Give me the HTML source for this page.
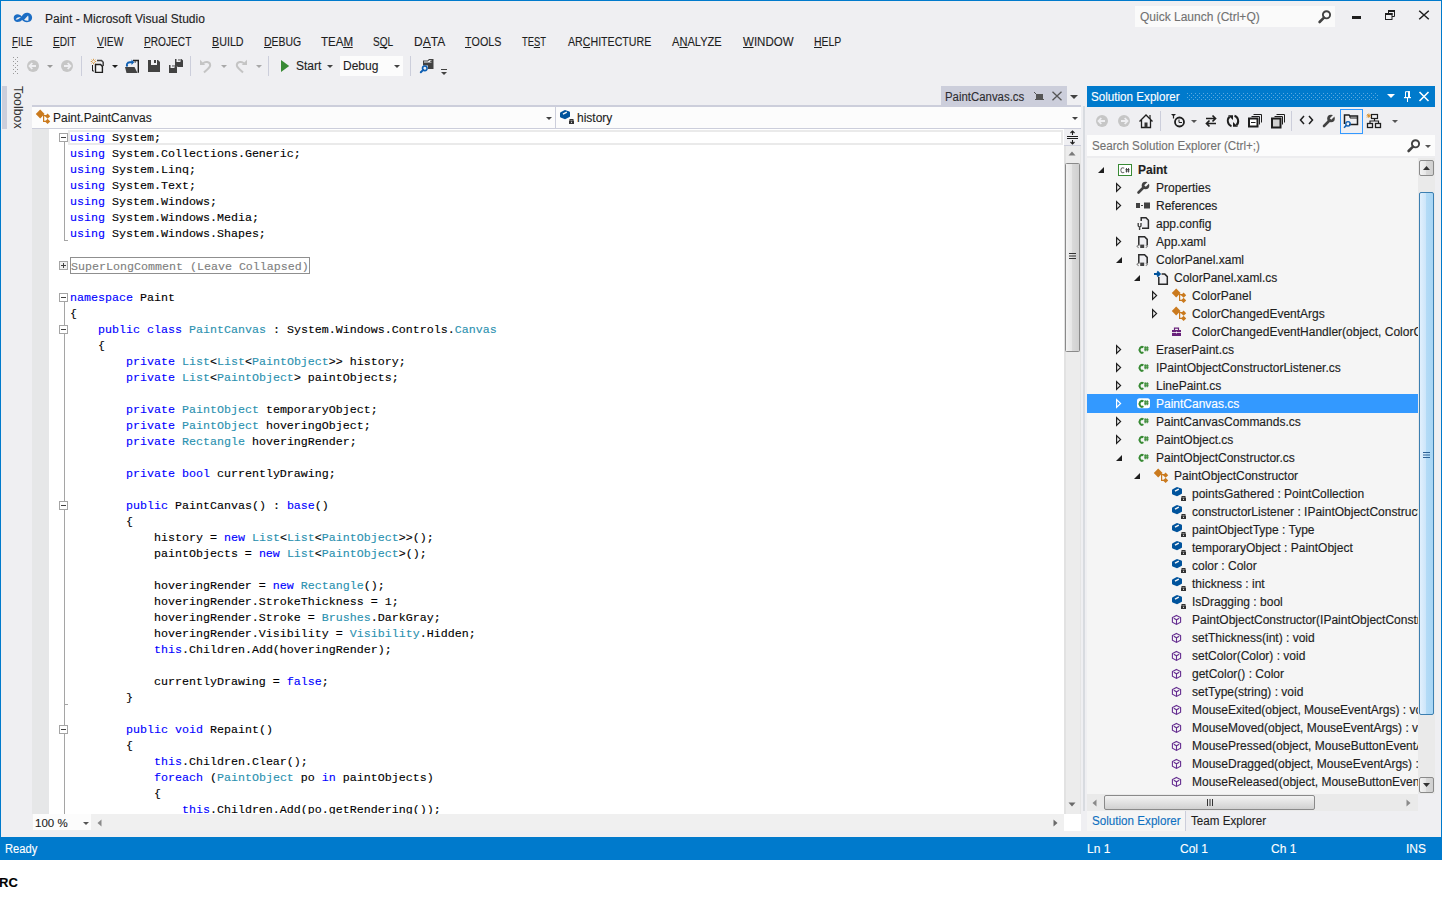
<!DOCTYPE html>
<html><head><meta charset="utf-8">
<style>
*{box-sizing:border-box}
html,body{margin:0;padding:0;width:1442px;height:900px;overflow:hidden;background:#fff;font-family:"Liberation Sans",sans-serif;font-size:12px;color:#1e1e1e}
.a{position:absolute;display:block}
.t{position:absolute;white-space:nowrap;line-height:14px;-webkit-text-stroke:0.12px currentColor}
#win{position:absolute;left:0;top:0;width:1442px;height:860px;background:#EFEFF2;border:1px solid #007ACC;border-bottom:none}
.mi{position:absolute;top:35px;line-height:14px;white-space:nowrap;transform-origin:0 0;color:#1e1e1e;-webkit-text-stroke:0.12px currentColor}
.mi u{text-decoration:none;position:relative}
.mi u:after{content:"";position:absolute;left:0;right:0;top:12px;height:1px;background:#1e1e1e}
.sep{position:absolute;width:1px;background:#CCCEDB}
.dd{position:absolute;width:0;height:0;border-left:3px solid transparent;border-right:3px solid transparent;border-top:3px solid #717171}
.code{position:absolute;left:70px;top:130px;height:684px;overflow:hidden;font-family:"Liberation Mono",monospace;font-size:11.67px;letter-spacing:0;line-height:16px;white-space:pre;color:#000;-webkit-text-stroke:0.12px currentColor}
.k{color:#0000FF}.ty{color:#2B91AF}
.row{position:absolute;height:18px;white-space:nowrap;line-height:18px;-webkit-text-stroke:0.15px currentColor}
.cb{position:absolute;left:59px;width:9px;height:9px;border:1px solid #A5A5A5;background:#fff}
.cb:before{content:"";position:absolute;left:1px;top:3px;width:5px;height:1px;background:#424242}
.ol{position:absolute;left:64px;width:1px;background:#A5A5A5}
#status{position:absolute;left:0;top:837px;width:1442px;height:23px;background:#007ACC;color:#fff}
</style></head>
<body>
<div id="win"></div>
<svg width="0" height="0" style="position:absolute">
<defs>
<linearGradient id="gthumb" x1="0" x2="1" y1="0" y2="0"><stop offset="0" stop-color="#F4F4F4"/><stop offset="0.45" stop-color="#E6E6E6"/><stop offset="0.5" stop-color="#D9D9D9"/><stop offset="1" stop-color="#CFCFCF"/></linearGradient>
<linearGradient id="gblue" x1="0" x2="1" y1="0" y2="0"><stop offset="0" stop-color="#E3F1FD"/><stop offset="0.45" stop-color="#CDE6FA"/><stop offset="0.5" stop-color="#B3DBF6"/><stop offset="1" stop-color="#A7D5F5"/></linearGradient>
<symbol id="aE" viewBox="0 0 18 18"><path d="M3 13H9V7z" fill="#1e1e1e"/></symbol>
<symbol id="aC" viewBox="0 0 18 18"><path d="M3.6 5.6V13.4L7.6 9.5z" fill="none" stroke="#1e1e1e" stroke-width="1.2" stroke-linejoin="miter"/></symbol>
<symbol id="aCw" viewBox="0 0 18 18"><path d="M3.6 5.6V13.4L7.6 9.5z" fill="none" stroke="#fff" stroke-width="1.2"/></symbol>
<symbol id="i_csproj" viewBox="0 0 18 18"><rect x="2.5" y="4.5" width="13" height="11" fill="#fff" stroke="#388A34"/><path d="M8.2 8.3A2.1 2.5 0 1 0 8.2 12.2" fill="none" stroke="#717171" stroke-width="1.1"/><path d="M10.5 8v4.5M12.5 8v4.5M9.5 9.5h4M9.5 11h4" stroke="#424242" stroke-width="0.9"/></symbol>
<symbol id="i_wrench" viewBox="0 0 18 18"><path d="M4.5 14.5L9.5 9.5" stroke="#424242" stroke-width="2.6" stroke-linecap="round"/><circle cx="11.5" cy="7.5" r="3.8" fill="#424242"/><path d="M11 8L14.8 4.2" stroke="#F5F5F5" stroke-width="2.2"/></symbol>
<symbol id="i_refs" viewBox="0 0 18 18"><rect x="2" y="7" width="4" height="5" fill="#424242"/><rect x="7" y="9" width="2" height="1" fill="#424242"/><rect x="10" y="6.5" width="6" height="6" fill="#424242"/></symbol>
<symbol id="i_config" viewBox="0 0 18 18"><path d="M7.2 7V3.8H12L14.4 6.2V14.3H8" fill="#EFEFF2" stroke="#2a2a2a" stroke-width="1.5"/><path d="M4.2 9v2.5a1.4 1.4 0 0 0 2.8 0V9M5.6 13v3" fill="none" stroke="#424242" stroke-width="1.4"/></symbol>
<symbol id="i_xaml" viewBox="0 0 18 18"><path d="M4.8 13.5V4.8H10.6L13.2 7.4V13.5" fill="#EFEFF2" stroke="#2a2a2a" stroke-width="1.5" stroke-linejoin="miter"/><rect x="6.2" y="12.6" width="4" height="3.4" fill="#424242"/><path d="M4.6 12.8L3 14.3 4.6 15.8M11.8 12.8L13.4 14.3 11.8 15.8" fill="none" stroke="#8a8a8a" stroke-width="1.1"/></symbol>
<symbol id="i_csbehind" viewBox="0 0 18 18"><path d="M6.8 9V16.3H15.3V8.6L12.8 6.1H9.6" fill="#EFEFF2" stroke="#2a2a2a" stroke-width="1.5"/><path d="M2 6H7.5M5.2 3.5L7.8 6 5.2 8.5" fill="none" stroke="#00539C" stroke-width="1.9"/></symbol>
<symbol id="i_class" viewBox="0 0 18 18"><path d="M6.2 2.6L10.6 7 6.2 11.4 1.8 7z" fill="#CA7A1E"/><path d="M9 8.6H13.5M9.6 8.6V14.4H13.5" fill="none" stroke="#CA7A1E" stroke-width="1.2"/><path d="M13.6 6.6L16.2 9.2 13.6 11.8 11 9.2z" fill="#CA7A1E"/><path d="M13.6 11.8L16.2 14.4 13.6 17 11 14.4z" fill="#CA7A1E"/></symbol>
<symbol id="i_delegate" viewBox="0 0 18 18"><rect x="2" y="8" width="9" height="6" fill="#68217A"/><path d="M4.5 8V6.2H8.5V8" fill="none" stroke="#68217A" stroke-width="1.2"/><path d="M2 10.5H11M6.5 9.5v2" stroke="#fff" stroke-width="0.8"/></symbol>
<symbol id="i_cs" viewBox="0 0 18 18"><path d="M9.4 7.4A2.5 2.9 0 1 0 9.4 12.3" fill="none" stroke="#388A34" stroke-width="2"/><path d="M11.2 6.3v5M13.2 6.3v5M10.2 7.9h4.4M10.2 9.8h4.4" stroke="#388A34" stroke-width="1.1"/></symbol>
<symbol id="i_cssel" viewBox="0 0 18 18"><rect x="3" y="4.2" width="13" height="10" rx="2.5" fill="#fff"/><path d="M9.4 7.4A2.5 2.9 0 1 0 9.4 12.3" fill="none" stroke="#388A34" stroke-width="2"/><path d="M11.2 6.3v5M13.2 6.3v5M10.2 7.9h4.4M10.2 9.8h4.4" stroke="#388A34" stroke-width="1.1"/></symbol>
<symbol id="i_field" viewBox="0 0 18 18"><path d="M2 6.2Q2 5.6 2.6 5.2L6.4 3.3Q7 3 7.6 3.2L11.4 4.6Q12 4.9 12 5.5V9.2Q12 9.8 11.4 10.1L7.6 12Q7 12.3 6.4 12L2.6 10.4Q2 10.1 2 9.5z" fill="#00539C"/><path d="M5 7.2L8.8 5.2" stroke="#F5F5F5" stroke-width="1.5"/><rect x="11" y="13.6" width="5" height="3.4" fill="#333"/><path d="M12.1 13.8V12.6H14.9V13.8" fill="none" stroke="#333" stroke-width="1.2"/><rect x="13" y="14.8" width="1" height="1" fill="#F5F5F5"/></symbol>
<symbol id="i_method" viewBox="0 0 18 18"><path d="M6.5 5.4L10.6 7.6V12.2L6.5 14.4 2.4 12.2V7.6z" fill="none" stroke="#652D90" stroke-width="1.1"/><path d="M3.8 8.3L6.5 9.8 9.2 8.3M6.5 9.8V14" fill="none" stroke="#652D90" stroke-width="1.1"/></symbol>
<symbol id="ddarrow" viewBox="0 0 6 3"><path d="M0 0H6L3 3z" fill="#717171"/></symbol>
</defs>
</svg>


<!-- ============ title bar ============ -->
<svg class="a" style="left:10px;top:8px" width="30" height="20" viewBox="0 0 30 20"><path fill="#1C6DC4" fill-rule="evenodd" d="M3.7 10C3.7 7.6 5.5 6.3 7.5 6.3 9.5 6.3 10.8 7.4 11.6 8.4 12.9 6.4 14.6 4.8 17 4.8 20 4.8 22.1 7 22.1 9.5 22.1 12.3 20 14.2 17 14.2 14.6 14.2 13.1 13.1 12.1 12 11.1 13.2 9.6 14 7.5 14 5.5 14 3.7 12.5 3.7 10Z M5.7 11.8C6 10.3 7.6 9.1 10.9 9 9.6 10.6 8 11.7 5.7 11.8Z M14.1 11.8L18.1 7.4C18.6 8.9 18.6 11 18.3 12.7 16.6 12.8 15.1 12.5 14.1 11.8Z"/></svg>
<div class="t" style="left:45px;top:12px">Paint - Microsoft Visual Studio</div>

<div class="a" style="left:1135px;top:6px;width:200px;height:21px;background:#FAFAFA"></div>
<div class="t" style="left:1140px;top:10px;color:#717171">Quick Launch (Ctrl+Q)</div>
<svg class="a" style="left:1317px;top:9px" width="16" height="15" viewBox="0 0 16 15"><circle cx="9.5" cy="5.8" r="3.6" fill="none" stroke="#424242" stroke-width="1.9"/><path d="M2.6 13L7 8.6" stroke="#424242" stroke-width="2.6" stroke-linecap="round"/></svg>

<div class="a" style="left:1352px;top:16px;width:9px;height:3px;background:#1e1e1e"></div>
<svg class="a" style="left:1384px;top:9px" width="12" height="12" viewBox="0 0 12 12"><path d="M4.5 1.5V4M4.5 2H10.5V7.5H8" fill="none" stroke="#1e1e1e" stroke-width="1"/><rect x="4" y="1" width="7" height="2" fill="#1e1e1e"/><rect x="1.5" y="4.5" width="6.5" height="6" fill="none" stroke="#1e1e1e" stroke-width="1"/><rect x="1" y="4" width="7.5" height="2" fill="#1e1e1e"/></svg>
<svg class="a" style="left:1418px;top:10px" width="12" height="10" viewBox="0 0 12 10"><path d="M1.2 0.8L10.8 9.2M10.8 0.8L1.2 9.2" stroke="#1e1e1e" stroke-width="1.5"/></svg>

<!-- ============ menu ============ -->
<div class="mi" style="left:12px;transform:scaleX(0.812)"><u>F</u>ILE</div>
<div class="mi" style="left:53px;transform:scaleX(0.841)"><u>E</u>DIT</div>
<div class="mi" style="left:97px;transform:scaleX(0.861)"><u>V</u>IEW</div>
<div class="mi" style="left:144px;transform:scaleX(0.845)"><u>P</u>ROJECT</div>
<div class="mi" style="left:212px;transform:scaleX(0.894)"><u>B</u>UILD</div>
<div class="mi" style="left:264px;transform:scaleX(0.871)"><u>D</u>EBUG</div>
<div class="mi" style="left:321px;transform:scaleX(0.961)">TEA<u>M</u></div>
<div class="mi" style="left:373px;transform:scaleX(0.842)">S<u>Q</u>L</div>
<div class="mi" style="left:414px;transform:scaleX(1.0)">D<u>A</u>TA</div>
<div class="mi" style="left:465px;transform:scaleX(0.893)"><u>T</u>OOLS</div>
<div class="mi" style="left:522px;transform:scaleX(0.784)">TE<u>S</u>T</div>
<div class="mi" style="left:568px;transform:scaleX(0.886)">AR<u>C</u>HITECTURE</div>
<div class="mi" style="left:672px;transform:scaleX(0.924)">A<u>N</u>ALYZE</div>
<div class="mi" style="left:743px;transform:scaleX(0.96)"><u>W</u>INDOW</div>
<div class="mi" style="left:814px;transform:scaleX(0.871)"><u>H</u>ELP</div>

<!-- ============ toolbar ============ -->
<svg class="a" style="left:12px;top:56px" width="8" height="20" viewBox="0 0 8 20" fill="#9A9A9A"><rect x="1" y="1" width="1" height="1"/><rect x="5" y="1" width="1" height="1"/><rect x="3" y="3" width="1" height="1"/><rect x="1" y="5" width="1" height="1"/><rect x="5" y="5" width="1" height="1"/><rect x="3" y="7" width="1" height="1"/><rect x="1" y="9" width="1" height="1"/><rect x="5" y="9" width="1" height="1"/><rect x="3" y="11" width="1" height="1"/><rect x="1" y="13" width="1" height="1"/><rect x="5" y="13" width="1" height="1"/><rect x="3" y="15" width="1" height="1"/><rect x="1" y="17" width="1" height="1"/><rect x="5" y="17" width="1" height="1"/></svg>
<svg class="a" style="left:26px;top:59px" width="14" height="14" viewBox="0 0 14 14"><circle cx="7" cy="7" r="6" fill="#C6C6C6"/><path d="M3.5 7H10M6.3 4L3.5 7 6.3 10" fill="none" stroke="#EFEFF2" stroke-width="1.8"/></svg>
<div class="dd" style="left:47px;top:65px;border-top-color:#999"></div>
<svg class="a" style="left:60px;top:59px" width="14" height="14" viewBox="0 0 14 14"><circle cx="7" cy="7" r="6" fill="#C6C6C6"/><path d="M10.5 7H4M7.7 4L10.5 7 7.7 10" fill="none" stroke="#EFEFF2" stroke-width="1.8"/></svg>
<div class="sep" style="left:81px;top:56px;height:20px"></div>
<svg class="a" style="left:90px;top:58px" width="16" height="16" viewBox="0 0 16 16"><path d="M3.5 0.8v5.4M0.8 3.5h5.4M1.6 1.6l3.8 3.8M5.4 1.6L1.6 5.4" stroke="#D68A1E" stroke-width="0.8"/><circle cx="3.5" cy="3.5" r="1.3" fill="#EFEFF2"/><path d="M7 2.5H11.5L13.2 4.2V8" fill="none" stroke="#424242" stroke-width="1.5"/><path d="M5.5 6.5H10.5L12.4 8.4V14.4H5.5z" fill="#F6F6F6" stroke="#1e1e1e" stroke-width="1.4"/><path d="M2.5 7V13H4" fill="none" stroke="#1e1e1e" stroke-width="1"/></svg>
<div class="dd" style="left:112px;top:65px;border-top-color:#1e1e1e"></div>
<svg class="a" style="left:124px;top:58px" width="16" height="16" viewBox="0 0 16 16"><path d="M9 2.5H14.3V14.8" fill="none" stroke="#1e1e1e" stroke-width="1.4"/><rect x="10.5" y="3.5" width="1.5" height="1" fill="#1e1e1e"/><path d="M1 9H10.5L13.5 15H2.5z" fill="#424242"/><path d="M3.5 8.5C2 7 3 4.5 6 4.3H8.5" fill="none" stroke="#0E5FB3" stroke-width="1.9"/><path d="M7.5 1.5L10.2 4.3 7.5 7.1z" fill="#0E5FB3"/></svg>
<svg class="a" style="left:147px;top:59px" width="14" height="14" viewBox="0 0 14 14"><path d="M1 1H4V6H10V1H11L13 3V13H1z" fill="#424242"/><rect x="7" y="1" width="2" height="3" fill="#424242"/></svg>
<svg class="a" style="left:168px;top:58px" width="18" height="16" viewBox="0 0 18 16"><path d="M7 1H8.5V4H12.5V1H13.5L15 2.5V9H9.8L8.5 7.7V8H7z" fill="#424242"/><rect x="10.5" y="1" width="1" height="1.8" fill="#424242"/><path d="M1 7H2.5V10H6.5V7H7.5L9 8.5V15H1z" fill="#424242"/><rect x="4.5" y="7" width="1" height="1.8" fill="#424242"/></svg>
<div class="sep" style="left:190px;top:56px;height:20px"></div>
<svg class="a" style="left:199px;top:58px" width="14" height="16" viewBox="0 0 14 16"><path d="M4 5.5C6 3 11 3.5 11.2 7 11.4 9.5 8 11.5 5 14.5" fill="none" stroke="#C4C4C4" stroke-width="2"/><path d="M1 1.8V7H6.2z" fill="#C4C4C4"/></svg>
<div class="dd" style="left:221px;top:65px;border-top-color:#A8A8A8"></div>
<svg class="a" style="left:234px;top:58px" width="14" height="16" viewBox="0 0 14 16"><path d="M10 5.5C8 3 3 3.5 2.8 7 2.6 9.5 6 11.5 9 14.5" fill="none" stroke="#C4C4C4" stroke-width="2"/><path d="M13 1.8V7H7.8z" fill="#C4C4C4"/></svg>
<div class="dd" style="left:256px;top:65px;border-top-color:#A8A8A8"></div>
<div class="sep" style="left:268px;top:56px;height:20px"></div>
<svg class="a" style="left:280px;top:59px" width="10" height="14" viewBox="0 0 10 14"><path d="M1 1V13L9.2 7z" fill="#388A34"/></svg>
<div class="t" style="left:296px;top:59px">Start</div>
<div class="dd" style="left:327px;top:65px;border-top-color:#424242"></div>
<div class="a" style="left:340px;top:56px;width:63px;height:20px;background:#FCFCFC"></div>
<div class="t" style="left:343px;top:59px">Debug</div>
<div class="dd" style="left:394px;top:65px;border-top-color:#424242"></div>
<div class="sep" style="left:410px;top:56px;height:20px"></div>
<svg class="a" style="left:419px;top:58px" width="16" height="16" viewBox="0 0 16 16"><path d="M4 2.5H8.5L10 1H14.5V11H9V7.5H4z" fill="#424242"/><path d="M5 3.5H8.8L10.2 2.2H12.5V4.5H5z" fill="#F5F5F5"/><circle cx="12" cy="3.4" r="0.7" fill="#1e1e1e"/><circle cx="5.8" cy="10.3" r="2.3" fill="#EFEFF2" stroke="#0E5FB3" stroke-width="1.6"/><path d="M1.8 14.3L4.2 11.9" stroke="#0E5FB3" stroke-width="2" stroke-linecap="round"/></svg>
<div class="a" style="left:441px;top:69px;width:6px;height:1px;background:#424242"></div>
<div class="dd" style="left:441px;top:72px;border-top-color:#424242"></div>

<!-- ============ toolbox tab ============ -->
<div class="a" style="left:2px;top:86px;width:5px;height:43px;background:#CCCEDB"></div>
<div class="t" style="left:25px;top:86px;transform-origin:0 0;transform:rotate(90deg) scaleX(1.03);color:#333;-webkit-text-stroke:0">Toolbox</div>

<!-- ============ document tab ============ -->
<div class="a" style="left:941px;top:86px;width:126px;height:19px;background:#CCCEDB"></div>
<div class="t" style="transform-origin:0 0;transform:scaleX(0.95);left:945px;top:90px;color:#2d2d30">PaintCanvas.cs</div>
<svg class="a" style="left:1033px;top:91px" width="12" height="10" viewBox="0 0 12 10"><path d="M1 1L4 4" stroke="#555" stroke-width="1"/><rect x="3" y="3" width="7" height="5" fill="#555"/><rect x="2" y="8" width="9" height="1" fill="#555"/></svg>
<svg class="a" style="left:1051px;top:91px" width="12" height="10" viewBox="0 0 12 10"><path d="M1.5 0.8L10.5 9.2M10.5 0.8L1.5 9.2" stroke="#555" stroke-width="1.3"/></svg>
<div class="dd" style="left:1070px;top:95px;border-left-width:4px;border-right-width:4px;border-top:4px solid #424242"></div>

<!-- ============ editor frame ============ -->
<div class="a" style="left:32px;top:105px;width:1049px;height:2px;background:#CCCEDB"></div>
<div class="a" style="left:32px;top:107px;width:1049px;height:21px;background:#FCFCFC"></div>
<div class="a" style="left:32px;top:128px;width:1049px;height:1px;background:#CCCEDB"></div>
<div class="a" style="left:555px;top:107px;width:1px;height:21px;background:#CCCEDB"></div>
<svg class="a" style="left:34px;top:107px" width="18" height="18"><use href="#i_class"/></svg>
<div class="t" style="left:53px;top:111px">Paint.PaintCanvas</div>
<div class="dd" style="left:546px;top:117px;border-top-color:#424242"></div>
<svg class="a" style="left:558px;top:107px" width="18" height="18"><use href="#i_field"/></svg>
<div class="t" style="left:577px;top:111px">history</div>
<div class="dd" style="left:1072px;top:117px;border-top-color:#424242"></div>

<div class="a" style="left:32px;top:129px;width:17px;height:685px;background:#E6E7E8"></div>
<div class="a" style="left:49px;top:129px;width:1015px;height:685px;background:#fff"></div>
<!-- current line highlight -->
<div class="a" style="left:68px;top:130px;width:995px;height:15px;border:2px solid #EAEAEA"></div>
<!-- outlining -->
<div class="cb" style="top:133px"></div>
<div class="ol" style="top:142px;height:98px"></div>
<div class="a" style="left:64px;top:240px;width:4px;height:1px;background:#A5A5A5"></div>
<div class="cb" style="top:261px;background:#F0F0F0"><div class="a" style="left:3px;top:1px;width:1px;height:5px;background:#424242"></div></div>
<div class="a" style="left:70px;top:257px;width:240px;height:17px;border:1px solid #8F8F8F"></div>
<div class="cb" style="top:293px"></div>
<div class="ol" style="top:302px;height:23px"></div>
<div class="cb" style="top:325px"></div>
<div class="ol" style="top:334px;height:480px"></div>
<div class="cb" style="top:501px"></div>
<div class="a" style="left:64px;top:704px;width:4px;height:1px;background:#A5A5A5"></div>
<div class="cb" style="top:725px"></div>

<!-- editor scrollbars -->
<div class="a" style="left:1064px;top:129px;width:17px;height:685px;background:#ECECEC;border-left:2px solid #E2E2E2;border-right:1px solid #E5E5E5"></div>
<div class="a" style="left:1083px;top:106px;width:2px;height:705px;background:#D8DBE0"></div>
<div class="a" style="left:1064px;top:129px;width:17px;height:17px;background:#EFEFF2;border-bottom:1px solid #CCCEDB"></div>
<svg class="a" style="left:1066px;top:130px" width="13" height="15" viewBox="0 0 13 15"><path d="M1 6.5H12M1 8.5H12" stroke="#1e1e1e" stroke-width="1"/><path d="M6.5 1V5M4.5 3L6.5 1 8.5 3M6.5 14V10M4.5 12L6.5 14 8.5 12" fill="none" stroke="#1e1e1e" stroke-width="1.1"/></svg>
<svg class="a" style="left:1068px;top:151px" width="8" height="5" viewBox="0 0 8 5"><path d="M0.5 4.5H7.5L4 0.5z" fill="#7A7A7A"/></svg>
<svg class="a" style="left:1064px;top:162px" width="17" height="191" viewBox="0 0 17 191"><rect x="1.5" y="1.5" width="14" height="188" rx="1" fill="url(#gthumb)" stroke="#8A8A8A"/><path d="M5 91.5H12M5 94H12M5 96.5H12" stroke="#333" stroke-width="1"/></svg>
<svg class="a" style="left:1068px;top:802px" width="8" height="5" viewBox="0 0 8 5"><path d="M0.5 0.5H7.5L4 4.5z" fill="#6A6A6A"/></svg>
<div class="a" style="left:32px;top:814px;width:1032px;height:17px;background:#F0F0F0"></div>
<div class="a" style="left:1064px;top:814px;width:17px;height:17px;background:#fff"></div>
<div class="a" style="left:33px;top:814px;width:58px;height:16px;background:#FCFCFC"></div>
<div class="t" style="left:35px;top:816px;font-size:11.5px">100 %</div>
<div class="dd" style="left:83px;top:822px;border-top-color:#555"></div>
<svg class="a" style="left:97px;top:819px" width="5" height="8" viewBox="0 0 5 8"><path d="M4.5 0.5V7.5L0.5 4z" fill="#8A8A8A"/></svg>
<svg class="a" style="left:1053px;top:819px" width="5" height="8" viewBox="0 0 5 8"><path d="M0.5 0.5V7.5L4.5 4z" fill="#6A6A6A"/></svg>

<!-- code -->
<div class="code"><span class="k">using</span> System;
<span class="k">using</span> System.Collections.Generic;
<span class="k">using</span> System.Linq;
<span class="k">using</span> System.Text;
<span class="k">using</span> System.Windows;
<span class="k">using</span> System.Windows.Media;
<span class="k">using</span> System.Windows.Shapes;

<span style="color:#808080;position:relative;left:1px;top:1px">SuperLongComment (Leave Collapsed)</span>

<span class="k">namespace</span> Paint
{
    <span class="k">public</span> <span class="k">class</span> <span class="ty">PaintCanvas</span> : System.Windows.Controls.<span class="ty">Canvas</span>
    {
        <span class="k">private</span> <span class="ty">List</span>&lt;<span class="ty">List</span>&lt;<span class="ty">PaintObject</span>&gt;&gt; history;
        <span class="k">private</span> <span class="ty">List</span>&lt;<span class="ty">PaintObject</span>&gt; paintObjects;

        <span class="k">private</span> <span class="ty">PaintObject</span> temporaryObject;
        <span class="k">private</span> <span class="ty">PaintObject</span> hoveringObject;
        <span class="k">private</span> <span class="ty">Rectangle</span> hoveringRender;

        <span class="k">private</span> <span class="k">bool</span> currentlyDrawing;

        <span class="k">public</span> PaintCanvas() : <span class="k">base</span>()
        {
            history = <span class="k">new</span> <span class="ty">List</span>&lt;<span class="ty">List</span>&lt;<span class="ty">PaintObject</span>&gt;&gt;();
            paintObjects = <span class="k">new</span> <span class="ty">List</span>&lt;<span class="ty">PaintObject</span>&gt;();

            hoveringRender = <span class="k">new</span> <span class="ty">Rectangle</span>();
            hoveringRender.StrokeThickness = 1;
            hoveringRender.Stroke = <span class="ty">Brushes</span>.DarkGray;
            hoveringRender.Visibility = <span class="ty">Visibility</span>.Hidden;
            <span class="k">this</span>.Children.Add(hoveringRender);

            currentlyDrawing = <span class="k">false</span>;
        }

        <span class="k">public</span> <span class="k">void</span> Repaint()
        {
            <span class="k">this</span>.Children.Clear();
            <span class="k">foreach</span> (<span class="ty">PaintObject</span> po <span class="k">in</span> paintObjects)
            {
                <span class="k">this</span>.Children.Add(po.getRendering());</div>

<!-- ============ solution explorer ============ -->
<div class="a" style="left:1087px;top:86px;width:348px;height:21px;background:#007ACC"></div>
<div class="t" style="transform-origin:0 0;transform:scaleX(0.97);left:1091px;top:90px;color:#fff">Solution Explorer</div>
<svg class="a" style="left:1187px;top:93px" width="192" height="7" viewBox="0 0 192 7"><defs><pattern id="dots" width="4" height="4" patternUnits="userSpaceOnUse"><rect x="0" y="0" width="1" height="1" fill="#5AA9E0"/><rect x="2" y="2" width="1" height="1" fill="#5AA9E0"/></pattern></defs><rect width="192" height="7" fill="url(#dots)"/></svg>
<div class="dd" style="left:1387px;top:94px;border-left-width:4px;border-right-width:4px;border-top:4px solid #fff"></div>
<svg class="a" style="left:1403px;top:89px" width="12" height="14" viewBox="0 0 12 14"><path d="M2.5 2.7H6.5V8.5H2.5z" fill="none" stroke="#fff" stroke-width="1"/><rect x="5" y="2.2" width="2" height="6.5" fill="#fff"/><rect x="1" y="8" width="7" height="1.2" fill="#fff"/><rect x="4" y="9" width="1" height="4" fill="#fff"/></svg>
<svg class="a" style="left:1418px;top:91px" width="12" height="11" viewBox="0 0 12 11"><path d="M1.5 1L10.5 10M10.5 1L1.5 10" stroke="#fff" stroke-width="1.6"/></svg>

<!-- SE toolbar -->
<svg class="a" style="left:1095px;top:114px" width="14" height="14" viewBox="0 0 14 14"><circle cx="7" cy="7" r="6" fill="#C6C6C6"/><path d="M3.5 7H10M6.3 4L3.5 7 6.3 10" fill="none" stroke="#EFEFF2" stroke-width="1.8"/></svg>
<svg class="a" style="left:1117px;top:114px" width="14" height="14" viewBox="0 0 14 14"><circle cx="7" cy="7" r="6" fill="#C6C6C6"/><path d="M10.5 7H4M7.7 4L10.5 7 7.7 10" fill="none" stroke="#EFEFF2" stroke-width="1.8"/></svg>
<svg class="a" style="left:1138px;top:113px" width="16" height="16" viewBox="0 0 16 16"><path d="M1.5 8.5L8 2 14.5 8.5M3.5 7V14.5H12.5V7" fill="none" stroke="#1e1e1e" stroke-width="1.3"/><rect x="6.5" y="9.5" width="3" height="5" fill="#333"/><path d="M12 2V6" stroke="#1e1e1e" stroke-width="1.2"/></svg>
<div class="sep" style="left:1160px;top:111px;height:20px"></div>
<svg class="a" style="left:1170px;top:113px" width="16" height="16" viewBox="0 0 16 16"><path d="M1 1H6L3.5 3.5z" fill="#1e1e1e"/><path d="M3.5 3V5.5" stroke="#1e1e1e" stroke-width="1.2"/><circle cx="9.5" cy="9" r="4.5" fill="none" stroke="#1e1e1e" stroke-width="1.8"/><path d="M9 6.5V9.5H12" fill="none" stroke="#1e1e1e" stroke-width="1"/></svg>
<div class="dd" style="left:1191px;top:120px;border-top-color:#555"></div>
<svg class="a" style="left:1204px;top:114px" width="14" height="14" viewBox="0 0 14 14"><path d="M2 4.5H11M8.5 1.5L11.5 4.5 8.5 7.5M12 9.5H3M5.5 6.5L2.5 9.5 5.5 12.5" fill="none" stroke="#1e1e1e" stroke-width="1.7"/></svg>
<svg class="a" style="left:1226px;top:114px" width="14" height="14" viewBox="0 0 14 14"><path d="M5.5 12.2A5 5.5 0 0 1 3.5 2.8M8.5 1.8A5 5.5 0 0 1 10.5 11.2" fill="none" stroke="#1e1e1e" stroke-width="2"/><path d="M2 1.2H7V6z M12 12.8H7V8z" fill="#1e1e1e"/></svg>
<svg class="a" style="left:1247px;top:113px" width="16" height="15" viewBox="0 0 16 15"><path d="M6.5 1.5H14.5V9.5M4.5 3.5H12.5V11.5" fill="none" stroke="#1e1e1e" stroke-width="1"/><rect x="2" y="5.5" width="8.5" height="8" fill="#fff" stroke="#1e1e1e" stroke-width="2"/><rect x="4" y="9" width="4.5" height="1" fill="#1e1e1e"/></svg>
<svg class="a" style="left:1270px;top:113px" width="16" height="16" viewBox="0 0 16 16"><path d="M6.5 1.5H14.5V9.5M4.5 3.5H12.5V11.5" fill="none" stroke="#1e1e1e" stroke-width="1"/><rect x="2" y="5.5" width="8.5" height="9" fill="#CFCFCF" stroke="#1e1e1e" stroke-width="2"/></svg>
<div class="sep" style="left:1291px;top:111px;height:20px"></div>
<svg class="a" style="left:1299px;top:114px" width="15" height="12" viewBox="0 0 15 12"><path d="M5 2L1.5 6 5 10M10 2L13.5 6 10 10" fill="none" stroke="#1e1e1e" stroke-width="1.5"/></svg>
<svg class="a" style="left:1322px;top:113px" width="14" height="15" viewBox="0 0 14 15"><path d="M2 13L7 8" stroke="#424242" stroke-width="2.6" stroke-linecap="round"/><circle cx="9" cy="5.5" r="3.8" fill="#424242"/><path d="M8.5 6L12.5 2" stroke="#EFEFF2" stroke-width="2.1"/></svg>
<div class="a" style="left:1340px;top:109px;width:23px;height:25px;border:1px solid #3399FF"></div>
<svg class="a" style="left:1343px;top:113px" width="17" height="16" viewBox="0 0 17 16"><path d="M1.5 11V2H6L7 3H14.5V11.5H6" fill="none" stroke="#1e1e1e" stroke-width="1.5"/><path d="M7 3V5H14.5" fill="none" stroke="#1e1e1e" stroke-width="1"/><circle cx="5" cy="10.8" r="2.2" fill="none" stroke="#0E5FB3" stroke-width="1.3"/><path d="M1 14.8L3.4 12.4" stroke="#0E5FB3" stroke-width="1.6"/></svg>
<svg class="a" style="left:1366px;top:113px" width="16" height="16" viewBox="0 0 16 16"><path d="M1 1L4.5 4.5M4.5 1L1 4.5M2.75 0.5V5M0.5 2.75H5" stroke="#D68A1E" stroke-width="0.8"/><rect x="5.5" y="1.5" width="6" height="4" fill="none" stroke="#1e1e1e" stroke-width="1.2"/><path d="M8.5 5.5V8M4 10V8H12.5V10" fill="none" stroke="#1e1e1e" stroke-width="1.2"/><rect x="1.5" y="10.5" width="5" height="4" fill="none" stroke="#1e1e1e" stroke-width="1.3"/><rect x="9.5" y="10.5" width="5" height="4" fill="none" stroke="#1e1e1e" stroke-width="1.3"/></svg>
<div class="dd" style="left:1392px;top:120px;border-top-color:#555"></div>

<div class="a" style="left:1087px;top:135px;width:348px;height:21px;background:#FCFCFC"></div>
<div class="t" style="transform-origin:0 0;transform:scaleX(0.97);left:1092px;top:139px;color:#717171">Search Solution Explorer (Ctrl+;)</div>
<svg class="a" style="left:1406px;top:138px" width="16" height="15" viewBox="0 0 16 15"><circle cx="9.5" cy="5.8" r="3.6" fill="none" stroke="#424242" stroke-width="1.9"/><path d="M2.6 13L7 8.6" stroke="#424242" stroke-width="2.6" stroke-linecap="round"/></svg>
<div class="dd" style="left:1425px;top:145px;border-top-color:#555"></div>

<div class="a" style="left:1087px;top:156px;width:348px;height:2px;background:#EDEDEF"></div>
<div class="a" style="left:1087px;top:158px;width:331px;height:636px;background:#F5F5F5;overflow:hidden">
<div class="a" style="left:0;top:236px;width:331px;height:19px;background:#3399FF"></div>
<svg class="a" style="left:8px;top:2px" width="18" height="18"><use href="#aE"/></svg>
<svg class="a" style="left:29px;top:2px" width="18" height="18"><use href="#i_csproj"/></svg>
<div class="row" style="left:51px;top:3px;font-weight:bold;">Paint</div>
<svg class="a" style="left:26px;top:20px" width="18" height="18"><use href="#aC"/></svg>
<svg class="a" style="left:47px;top:20px" width="18" height="18"><use href="#i_wrench"/></svg>
<div class="row" style="left:69px;top:21px;">Properties</div>
<svg class="a" style="left:26px;top:38px" width="18" height="18"><use href="#aC"/></svg>
<svg class="a" style="left:47px;top:38px" width="18" height="18"><use href="#i_refs"/></svg>
<div class="row" style="left:69px;top:39px;">References</div>
<svg class="a" style="left:47px;top:56px" width="18" height="18"><use href="#i_config"/></svg>
<div class="row" style="left:69px;top:57px;">app.config</div>
<svg class="a" style="left:26px;top:74px" width="18" height="18"><use href="#aC"/></svg>
<svg class="a" style="left:47px;top:74px" width="18" height="18"><use href="#i_xaml"/></svg>
<div class="row" style="left:69px;top:75px;">App.xaml</div>
<svg class="a" style="left:26px;top:92px" width="18" height="18"><use href="#aE"/></svg>
<svg class="a" style="left:47px;top:92px" width="18" height="18"><use href="#i_xaml"/></svg>
<div class="row" style="left:69px;top:93px;">ColorPanel.xaml</div>
<svg class="a" style="left:44px;top:110px" width="18" height="18"><use href="#aE"/></svg>
<svg class="a" style="left:65px;top:110px" width="18" height="18"><use href="#i_csbehind"/></svg>
<div class="row" style="left:87px;top:111px;">ColorPanel.xaml.cs</div>
<svg class="a" style="left:62px;top:128px" width="18" height="18"><use href="#aC"/></svg>
<svg class="a" style="left:83px;top:128px" width="18" height="18"><use href="#i_class"/></svg>
<div class="row" style="left:105px;top:129px;">ColorPanel</div>
<svg class="a" style="left:62px;top:146px" width="18" height="18"><use href="#aC"/></svg>
<svg class="a" style="left:83px;top:146px" width="18" height="18"><use href="#i_class"/></svg>
<div class="row" style="left:105px;top:147px;">ColorChangedEventArgs</div>
<svg class="a" style="left:83px;top:164px" width="18" height="18"><use href="#i_delegate"/></svg>
<div class="row" style="left:105px;top:165px;">ColorChangedEventHandler(object, ColorChangedEventArgs)</div>
<svg class="a" style="left:26px;top:182px" width="18" height="18"><use href="#aC"/></svg>
<svg class="a" style="left:47px;top:182px" width="18" height="18"><use href="#i_cs"/></svg>
<div class="row" style="left:69px;top:183px;">EraserPaint.cs</div>
<svg class="a" style="left:26px;top:200px" width="18" height="18"><use href="#aC"/></svg>
<svg class="a" style="left:47px;top:200px" width="18" height="18"><use href="#i_cs"/></svg>
<div class="row" style="left:69px;top:201px;">IPaintObjectConstructorListener.cs</div>
<svg class="a" style="left:26px;top:218px" width="18" height="18"><use href="#aC"/></svg>
<svg class="a" style="left:47px;top:218px" width="18" height="18"><use href="#i_cs"/></svg>
<div class="row" style="left:69px;top:219px;">LinePaint.cs</div>
<svg class="a" style="left:26px;top:236px" width="18" height="18"><use href="#aCw"/></svg>
<svg class="a" style="left:47px;top:236px" width="18" height="18"><use href="#i_cssel"/></svg>
<div class="row" style="left:69px;top:237px;color:#fff;">PaintCanvas.cs</div>
<svg class="a" style="left:26px;top:254px" width="18" height="18"><use href="#aC"/></svg>
<svg class="a" style="left:47px;top:254px" width="18" height="18"><use href="#i_cs"/></svg>
<div class="row" style="left:69px;top:255px;">PaintCanvasCommands.cs</div>
<svg class="a" style="left:26px;top:272px" width="18" height="18"><use href="#aC"/></svg>
<svg class="a" style="left:47px;top:272px" width="18" height="18"><use href="#i_cs"/></svg>
<div class="row" style="left:69px;top:273px;">PaintObject.cs</div>
<svg class="a" style="left:26px;top:290px" width="18" height="18"><use href="#aE"/></svg>
<svg class="a" style="left:47px;top:290px" width="18" height="18"><use href="#i_cs"/></svg>
<div class="row" style="left:69px;top:291px;">PaintObjectConstructor.cs</div>
<svg class="a" style="left:44px;top:308px" width="18" height="18"><use href="#aE"/></svg>
<svg class="a" style="left:65px;top:308px" width="18" height="18"><use href="#i_class"/></svg>
<div class="row" style="left:87px;top:309px;">PaintObjectConstructor</div>
<svg class="a" style="left:83px;top:326px" width="18" height="18"><use href="#i_field"/></svg>
<div class="row" style="left:105px;top:327px;">pointsGathered : PointCollection</div>
<svg class="a" style="left:83px;top:344px" width="18" height="18"><use href="#i_field"/></svg>
<div class="row" style="left:105px;top:345px;">constructorListener : IPaintObjectConstructorListener</div>
<svg class="a" style="left:83px;top:362px" width="18" height="18"><use href="#i_field"/></svg>
<div class="row" style="left:105px;top:363px;">paintObjectType : Type</div>
<svg class="a" style="left:83px;top:380px" width="18" height="18"><use href="#i_field"/></svg>
<div class="row" style="left:105px;top:381px;">temporaryObject : PaintObject</div>
<svg class="a" style="left:83px;top:398px" width="18" height="18"><use href="#i_field"/></svg>
<div class="row" style="left:105px;top:399px;">color : Color</div>
<svg class="a" style="left:83px;top:416px" width="18" height="18"><use href="#i_field"/></svg>
<div class="row" style="left:105px;top:417px;">thickness : int</div>
<svg class="a" style="left:83px;top:434px" width="18" height="18"><use href="#i_field"/></svg>
<div class="row" style="left:105px;top:435px;">IsDragging : bool</div>
<svg class="a" style="left:83px;top:452px" width="18" height="18"><use href="#i_method"/></svg>
<div class="row" style="left:105px;top:453px;">PaintObjectConstructor(IPaintObjectConstructorListener)</div>
<svg class="a" style="left:83px;top:470px" width="18" height="18"><use href="#i_method"/></svg>
<div class="row" style="left:105px;top:471px;">setThickness(int) : void</div>
<svg class="a" style="left:83px;top:488px" width="18" height="18"><use href="#i_method"/></svg>
<div class="row" style="left:105px;top:489px;">setColor(Color) : void</div>
<svg class="a" style="left:83px;top:506px" width="18" height="18"><use href="#i_method"/></svg>
<div class="row" style="left:105px;top:507px;">getColor() : Color</div>
<svg class="a" style="left:83px;top:524px" width="18" height="18"><use href="#i_method"/></svg>
<div class="row" style="left:105px;top:525px;">setType(string) : void</div>
<svg class="a" style="left:83px;top:542px" width="18" height="18"><use href="#i_method"/></svg>
<div class="row" style="left:105px;top:543px;">MouseExited(object, MouseEventArgs) : void</div>
<svg class="a" style="left:83px;top:560px" width="18" height="18"><use href="#i_method"/></svg>
<div class="row" style="left:105px;top:561px;">MouseMoved(object, MouseEventArgs) : void</div>
<svg class="a" style="left:83px;top:578px" width="18" height="18"><use href="#i_method"/></svg>
<div class="row" style="left:105px;top:579px;">MousePressed(object, MouseButtonEventArgs) : void</div>
<svg class="a" style="left:83px;top:596px" width="18" height="18"><use href="#i_method"/></svg>
<div class="row" style="left:105px;top:597px;">MouseDragged(object, MouseEventArgs) : void</div>
<svg class="a" style="left:83px;top:614px" width="18" height="18"><use href="#i_method"/></svg>
<div class="row" style="left:105px;top:615px;">MouseReleased(object, MouseButtonEventArgs) : void</div>
<svg class="a" style="left:83px;top:632px" width="18" height="18"><use href="#i_method"/></svg>
<div class="row" style="left:105px;top:633px;">MouseClicked(object, MouseButtonEventArgs) : void</div>
</div>

<!-- SE vscroll -->
<div class="a" style="left:1418px;top:158px;width:17px;height:636px;background:#EAEAEA"></div>
<svg class="a" style="left:1418px;top:159px" width="17" height="18" viewBox="0 0 17 18"><rect x="1.5" y="1.5" width="14" height="15" rx="1.5" fill="url(#gthumb)" stroke="#8A8A8A"/><path d="M5 11H12L8.5 7z" fill="#333"/></svg>
<svg class="a" style="left:1418px;top:191px" width="17" height="525" viewBox="0 0 17 525"><rect x="1.5" y="1.5" width="14" height="522" rx="1.5" fill="url(#gblue)" stroke="#3C7FB1"/><path d="M5 261.5H12M5 264H12M5 266.5H12" stroke="#2E6296" stroke-width="1"/></svg>
<svg class="a" style="left:1418px;top:776px" width="17" height="18" viewBox="0 0 17 18"><rect x="1.5" y="1.5" width="14" height="15" rx="1.5" fill="url(#gthumb)" stroke="#8A8A8A"/><path d="M5 7H12L8.5 11z" fill="#333"/></svg>
<!-- SE hscroll -->
<div class="a" style="left:1087px;top:794px;width:331px;height:17px;background:#EAEAEA"></div>
<svg class="a" style="left:1092px;top:799px" width="5" height="8" viewBox="0 0 5 8"><path d="M4.5 0.5V7.5L0.5 4z" fill="#8A8A8A"/></svg>
<svg class="a" style="left:1103px;top:794px" width="213" height="17" viewBox="0 0 213 17"><linearGradient id="gh" x1="0" x2="0" y1="0" y2="1"><stop offset="0" stop-color="#F4F4F4"/><stop offset="0.5" stop-color="#E2E2E2"/><stop offset="1" stop-color="#CFCFCF"/></linearGradient><rect x="1.5" y="1.5" width="210" height="14" rx="1.5" fill="url(#gh)" stroke="#8A8A8A"/><path d="M104.5 5V12M107 5V12M109.5 5V12" stroke="#333" stroke-width="1"/></svg>
<svg class="a" style="left:1406px;top:799px" width="5" height="8" viewBox="0 0 5 8"><path d="M0.5 0.5V7.5L4.5 4z" fill="#8A8A8A"/></svg>

<!-- SE bottom tabs -->
<div class="a" style="left:1087px;top:811px;width:98px;height:20px;background:#F5F5F5"></div>
<div class="a" style="left:1185px;top:811px;width:1px;height:20px;background:#CCCEDB"></div>
<div class="t" style="transform-origin:0 0;transform:scaleX(0.97);left:1092px;top:814px;color:#0E70C0">Solution Explorer</div>
<div class="t" style="transform-origin:0 0;transform:scaleX(0.97);left:1191px;top:814px;color:#1e1e1e">Team Explorer</div>

<!-- ============ status ============ -->
<div id="status">
<div class="t" style="left:5px;top:5px;transform-origin:0 0;transform:scaleX(0.93)">Ready</div>
<div class="t" style="left:1087px;top:5px">Ln 1</div>
<div class="t" style="left:1180px;top:5px">Col 1</div>
<div class="t" style="left:1271px;top:5px">Ch 1</div>
<div class="t" style="left:1406px;top:5px">INS</div>
</div>
<div class="t" style="left:-1px;top:876px;font-weight:bold;font-size:13px;color:#000">RC</div>
</body></html>
